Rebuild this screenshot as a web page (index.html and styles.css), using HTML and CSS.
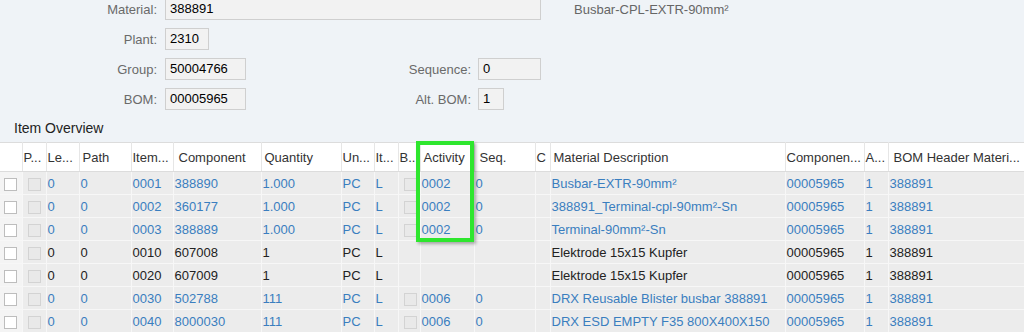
FILE: index.html
```html
<!DOCTYPE html>
<html lang="en">
<head>
    <meta charset="UTF-8">
    <title>BOM Item Overview</title>
    <link rel="stylesheet" href="styles.css">
</head>
<body>
    <div class="header-form">
        <div class="form-row">
            <span class="lbl">Material:</span>
            <div class="field w-material">388891</div>
            <span class="desc">Busbar-CPL-EXTR-90mm²</span>
        </div>
        <div class="form-row">
            <span class="lbl">Plant:</span>
            <div class="field w-plant">2310</div>
        </div>
        <div class="form-row">
            <span class="lbl">Group:</span>
            <div class="field w-group">50004766</div>
            <span class="lbl lbl-right">Sequence:</span>
            <div class="field w-seq">0</div>
        </div>
        <div class="form-row">
            <span class="lbl">BOM:</span>
            <div class="field w-group">00005965</div>
            <span class="lbl lbl-right">Alt. BOM:</span>
            <div class="field w-alt">1</div>
        </div>
    </div>

    <h2 class="section-title">Item Overview</h2>

    <div class="table-wrap">
        <table class="items">
            <colgroup>
                <col style="width:22px"><col style="width:24px"><col style="width:33px"><col style="width:52px">
                <col style="width:42px"><col style="width:88px"><col style="width:80px"><col style="width:33px">
                <col style="width:24px"><col style="width:22px"><col style="width:54px"><col style="width:61px">
                <col style="width:15px"><col style="width:235px"><col style="width:79px"><col style="width:24px">
                <col style="width:136px">
            </colgroup>
            <thead>
                <tr>
                    <th></th><th class="tight">P...</th><th class="tight">Le...</th><th>Path</th><th class="tight">Item...</th><th class="wide">Component</th>
                    <th>Quantity</th><th class="tight">Un...</th><th class="tight">It...</th><th class="tight">B...</th><th>Activity</th><th class="wide">Seq.</th>
                    <th class="tight">C</th><th>Material Description</th><th class="tight">Componen...</th><th class="tight">A...</th><th class="wide">BOM Header Materi...</th>
                </tr>
            </thead>
            <tbody>
                <tr class="link">
                    <td class="sel"><span class="cb"></span></td><td class="cbcell"><span class="cb off"></span></td>
                    <td>0</td><td>0</td><td>0001</td><td>388890</td><td>1.000</td><td>PC</td><td>L</td>
                    <td class="cbcell"><span class="cb off"></span></td><td>0002</td><td>0</td><td></td>
                    <td>Busbar-EXTR-90mm²</td><td>00005965</td><td>1</td><td>388891</td>
                </tr>
                <tr class="link">
                    <td class="sel"><span class="cb"></span></td><td class="cbcell"><span class="cb off"></span></td>
                    <td>0</td><td>0</td><td>0002</td><td>360177</td><td>1.000</td><td>PC</td><td>L</td>
                    <td class="cbcell"><span class="cb off"></span></td><td>0002</td><td>0</td><td></td>
                    <td>388891_Terminal-cpl-90mm²-Sn</td><td>00005965</td><td>1</td><td>388891</td>
                </tr>
                <tr class="link">
                    <td class="sel"><span class="cb"></span></td><td class="cbcell"><span class="cb off"></span></td>
                    <td>0</td><td>0</td><td>0003</td><td>388889</td><td>1.000</td><td>PC</td><td>L</td>
                    <td class="cbcell"><span class="cb off"></span></td><td>0002</td><td>0</td><td></td>
                    <td>Terminal-90mm²-Sn</td><td>00005965</td><td>1</td><td>388891</td>
                </tr>
                <tr>
                    <td class="sel"><span class="cb"></span></td><td class="cbcell"><span class="cb off"></span></td>
                    <td>0</td><td>0</td><td>0010</td><td>607008</td><td>1</td><td>PC</td><td>L</td>
                    <td></td><td></td><td></td><td></td>
                    <td>Elektrode 15x15 Kupfer</td><td>00005965</td><td>1</td><td>388891</td>
                </tr>
                <tr>
                    <td class="sel"><span class="cb"></span></td><td class="cbcell"><span class="cb off"></span></td>
                    <td>0</td><td>0</td><td>0020</td><td>607009</td><td>1</td><td>PC</td><td>L</td>
                    <td></td><td></td><td></td><td></td>
                    <td>Elektrode 15x15 Kupfer</td><td>00005965</td><td>1</td><td>388891</td>
                </tr>
                <tr class="link">
                    <td class="sel"><span class="cb"></span></td><td class="cbcell"><span class="cb off"></span></td>
                    <td>0</td><td>0</td><td>0030</td><td>502788</td><td>111</td><td>PC</td><td>L</td>
                    <td class="cbcell"><span class="cb off"></span></td><td>0006</td><td>0</td><td></td>
                    <td>DRX Reusable Blister busbar 388891</td><td>00005965</td><td>1</td><td>388891</td>
                </tr>
                <tr class="link">
                    <td class="sel"><span class="cb"></span></td><td class="cbcell"><span class="cb off"></span></td>
                    <td>0</td><td>0</td><td>0040</td><td>8000030</td><td>111</td><td>PC</td><td>L</td>
                    <td class="cbcell"><span class="cb off"></span></td><td>0006</td><td>0</td><td></td>
                    <td>DRX ESD EMPTY F35 800X400X150</td><td>00005965</td><td>1</td><td>388891</td>
                </tr>
            </tbody>
        </table>
        <!-- marker drawn over the Activity column -->
        <div class="highlight"></div>
    </div>
</body>
</html>
```

FILE: styles.css
```css
body {
    margin: 0;
    background-color: #eff3f7;
    font-family: "Liberation Sans", Arial, sans-serif;
    font-size: 13px;
    color: #333;
    overflow: hidden;
}
.header-form {
    margin-top: -2px;
}
.form-row {
    display: flex;
    align-items: center;
    height: 22px;
    margin-bottom: 8px;
}
.lbl {
    width: 157px;
    margin-right: 8px;
    text-align: right;
    color: #6a6a6a;
}
.lbl-right {
    width: 225px;
    margin-right: 7px;
}
.field {
    box-sizing: border-box;
    height: 22px;
    line-height: 20px;
    padding: 0 4px;
    border: 1px solid #cfcfcf;
    background-color: #f2f2f2;
    color: #000;
}
.w-material { width: 376px; }
.w-plant { width: 44px; }
.w-group { width: 81px; }
.w-seq { width: 63px; }
.w-alt { width: 26px; }
.desc {
    margin-left: 33px;
    color: #666;
}
.section-title {
    margin: 8px 0 4px 0;
    padding-left: 14px;
    height: 20px;
    line-height: 20px;
    font-size: 14px;
    font-weight: normal;
    color: #222;
}
.table-wrap {
    position: relative;
}
.items {
    width: 1024px;
    table-layout: fixed;
    border-collapse: collapse;
    border-top: 1px solid #dcdcdc;
}
.items th {
    height: 28px;
    padding: 0 3px;
    text-align: left;
    font-weight: normal;
    color: #333;
    background-color: #fff;
    border-right: 1px solid #e6e6e6;
    border-bottom: 1px solid #dcdcdc;
    white-space: nowrap;
    overflow: hidden;
}
.items th.tight {
    padding: 0 1px;
}
.items th.wide {
    padding-left: 5px;
}
.items td {
    height: 22px;
    padding: 0 1px;
    background-color: #ececec;
    color: #222;
    border-right: 1px solid #f7f7f7;
    border-bottom: 1px solid #f7f7f7;
    white-space: nowrap;
    overflow: hidden;
}
.items tr.link td {
    color: #3a7ebf;
}
.items td.sel {
    background-color: #f4f4f4;
    padding-left: 4px;
}
.items td.cbcell {
    padding-left: 5px;
}
.cb {
    display: inline-block;
    box-sizing: border-box;
    width: 13px;
    height: 13px;
    vertical-align: middle;
    border: 1px solid #bdbdbd;
    background-color: #fff;
}
.cb.off {
    border-color: #d3d3d3;
    background-color: #e9e9e9;
}
.highlight {
    position: absolute;
    left: 416px;
    top: -1px;
    width: 50px;
    height: 93px;
    border: 4px solid #2ee62e;
    box-shadow: 2px 2px 3px rgba(0, 0, 0, 0.3);
}
```
